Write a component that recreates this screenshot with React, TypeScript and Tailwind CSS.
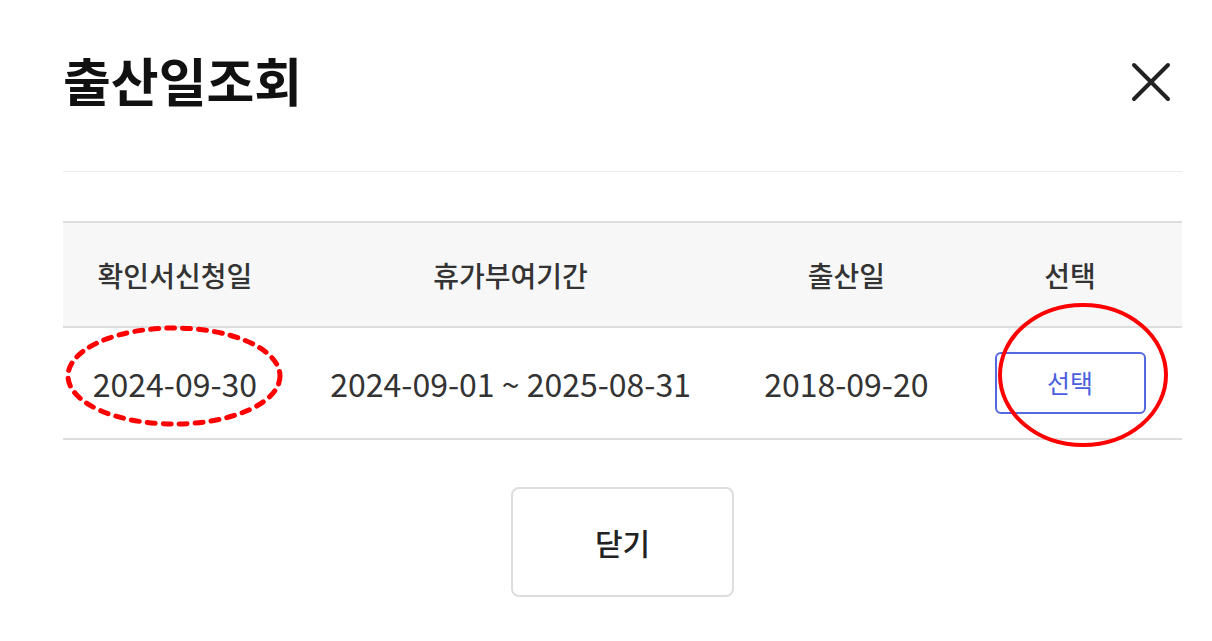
import React from 'react';

const FONT = '"Noto Sans CJK KR", "Noto Sans", sans-serif';

const ROWS = [
  { applied: '2024-09-30', period: '2024-09-01 ~ 2025-08-31', birth: '2018-09-20' },
];

export default function App() {
  return (
    <div className="relative h-[641px] w-[1212px] overflow-hidden bg-white pl-[63px] pr-[30px] text-[#333]" style={{ fontFamily: FONT }}>
      <div className="flex h-[172px] items-start justify-between border-b border-[#ececec] pt-[40px]">
        <h1 className="text-[52px] font-bold leading-[80px] text-[#111]">출산일조회</h1>
        <button className="mr-[11px] mt-[22px] text-[#222]" aria-label="닫기">
          <svg width="40" height="40" viewBox="0 0 40 40" fill="none" stroke="currentColor" strokeWidth="4" strokeLinecap="round">
            <path d="M3 3 L37 37 M37 3 L3 37" />
          </svg>
        </button>
      </div>

      <table className="mt-[49px] w-full table-fixed border-collapse">
        <colgroup>
          <col className="w-[20%]" />
          <col className="w-[40%]" />
          <col className="w-[20%]" />
          <col className="w-[20%]" />
        </colgroup>
        <thead>
          <tr className="h-[105px] border-y-2 border-[#dddddd] bg-[#f7f7f7]">
            {['확인서신청일', '휴가부여기간', '출산일', '선택'].map((h) => (
              <th key={h} className="text-[28px] font-medium text-[#333]">{h}</th>
            ))}
          </tr>
        </thead>
        <tbody>
          {ROWS.map((r) => (
            <tr key={r.applied} className="h-[112px] border-b-2 border-[#dddddd]">
              <td className="text-center text-[32px] font-normal text-[#333]">{r.applied}</td>
              <td className="text-center text-[32px] font-normal text-[#333]">{r.period}</td>
              <td className="text-center text-[32px] font-normal text-[#333]">{r.birth}</td>
              <td className="text-center">
                <button className="h-[62px] w-[151px] rounded-[6px] border-2 border-[#5468e0] text-[25px] font-normal text-[#4a5fe0]">선택</button>
              </td>
            </tr>
          ))}
        </tbody>
      </table>

      <div className="mt-[47px] flex justify-center">
        <button className="h-[110px] w-[223px] rounded-[8px] border-2 border-[#dddddd] text-[30px] font-medium text-[#222]">닫기</button>
      </div>

      {/* 빨간 표시 */}
      <svg className="pointer-events-none absolute left-0 top-0" width="1212" height="641">
        <ellipse cx="174" cy="376" rx="106" ry="48" fill="none" stroke="#ff0000" strokeWidth="5" strokeDasharray="8 8" strokeLinecap="round" />
        <ellipse cx="1083" cy="375" rx="83" ry="70" fill="none" stroke="#ff0000" strokeWidth="4" />
      </svg>
    </div>
  );
}
